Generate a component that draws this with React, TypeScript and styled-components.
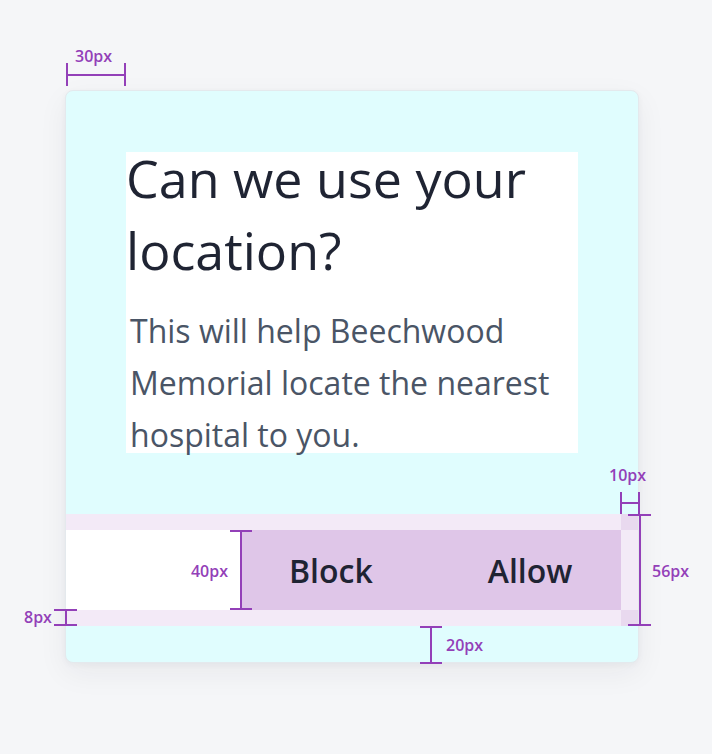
import React from "react";
import styled, { createGlobalStyle } from "styled-components";

const Global = createGlobalStyle`
  html, body { margin: 0; padding: 0; }
  body {
    background: #f5f6f8;
    font-family: "Open Sans", "Noto Sans", sans-serif;
    width: 712px;
    height: 754px;
    overflow: hidden;
  }
`;

const ACCENT = "#9340b8";

const Stage = styled.div`
  position: relative;
  width: 712px;
  height: 754px;
  padding: 90px 0 0 65px;
  box-sizing: border-box;
`;

const Card = styled.div`
  width: 574px;
  box-sizing: border-box;
  background: #e0fdfe;
  border: 1px solid #e4e9ed;
  border-radius: 8px;
  box-shadow: 0 10px 30px rgba(30, 41, 59, 0.06), 0 2px 6px rgba(30, 41, 59, 0.04);
  padding: 61px 0 36px;
`;

const Content = styled.div`
  display: flow-root;
  margin: 0 60px;
  height: 301px;
  background: #ffffff;
`;

const Title = styled.h1`
  margin: -10px 0 0;
  font-size: 52px;
  line-height: 72px;
  font-weight: 400;
  color: #1f2433;
`;

const Body = styled.p`
  margin: 19px 0 0;
  padding: 0 4px;
  font-size: 32px;
  line-height: 52px;
  font-weight: 400;
  color: #4a5566;
`;

const Bar = styled.div`
  margin-top: 61px;
  display: flex;
  padding: 16px 17px 16px 0;
  background:
    linear-gradient(#e9d9ef, #e9d9ef) right top / 17px 16px no-repeat,
    linear-gradient(#e9d9ef, #e9d9ef) right bottom / 17px 16px no-repeat,
    #f3eaf7;
`;

const Spacer = styled.div`
  width: 175px;
  height: 80px;
  background: #ffffff;
`;

const ButtonGroup = styled.div`
  flex: 1;
  display: flex;
  gap: 19px;
  background: #dfc6e8;
`;

const Button = styled.button`
  height: 80px;
  padding: 0 48px;
  border: 0;
  background: transparent;
  font-family: "Open Sans", "Noto Sans", sans-serif;
  font-size: 32px;
  font-weight: 600;
  color: #1f2433;
  cursor: pointer;
`;

type Box = { $x: number; $y: number; $w: number; $h: number };

const VBracket = styled.div<Box>`
  position: absolute;
  left: ${(p) => p.$x}px;
  top: ${(p) => p.$y}px;
  width: ${(p) => p.$w}px;
  height: ${(p) => p.$h}px;
  box-sizing: border-box;
  border-top: 2px solid ${ACCENT};
  border-bottom: 2px solid ${ACCENT};
  &::before {
    content: "";
    position: absolute;
    left: 50%;
    margin-left: -1px;
    top: 0;
    bottom: 0;
    width: 2px;
    background: ${ACCENT};
  }
`;

const HBracket = styled.div<Box>`
  position: absolute;
  left: ${(p) => p.$x}px;
  top: ${(p) => p.$y}px;
  width: ${(p) => p.$w}px;
  height: ${(p) => p.$h}px;
  box-sizing: border-box;
  border-left: 2px solid ${ACCENT};
  border-right: 2px solid ${ACCENT};
  &::before {
    content: "";
    position: absolute;
    top: 50%;
    margin-top: -1px;
    left: 0;
    right: 0;
    height: 2px;
    background: ${ACCENT};
  }
`;

const Label = styled.span<{ $x: number; $y: number; $right?: boolean }>`
  position: absolute;
  ${(p) => (p.$right ? `right: ${712 - p.$x}px;` : `left: ${p.$x}px;`)}
  top: ${(p) => p.$y - 10}px;
  font-size: 16px;
  line-height: 20px;
  font-weight: 600;
  color: ${ACCENT};
  white-space: nowrap;
`;

export default function App() {
  return (
    <>
      <Global />
      <Stage>
        <Card>
          <Content>
            <Title>Can we use your location?</Title>
            <Body>This will help Beechwood Memorial locate the nearest hospital to you.</Body>
          </Content>
          <Bar>
            <Spacer />
            <ButtonGroup>
              <Button>Block</Button>
              <Button>Allow</Button>
            </ButtonGroup>
          </Bar>
        </Card>

        <HBracket $x={66} $y={63} $w={60} $h={23} />
        <Label $x={75} $y={56}>30px</Label>

        <VBracket $x={230} $y={530} $w={22} $h={80} />
        <Label $x={228} $y={571} $right>40px</Label>

        <VBracket $x={54} $y={609} $w={23} $h={17} />
        <Label $x={24} $y={617}>8px</Label>

        <HBracket $x={620} $y={492} $w={20} $h={22} />
        <Label $x={609} $y={475}>10px</Label>

        <VBracket $x={628} $y={514} $w={23} $h={112} />
        <Label $x={652} $y={571}>56px</Label>

        <VBracket $x={420} $y={626} $w={22} $h={38} />
        <Label $x={446} $y={645}>20px</Label>
      </Stage>
    </>
  );
}
